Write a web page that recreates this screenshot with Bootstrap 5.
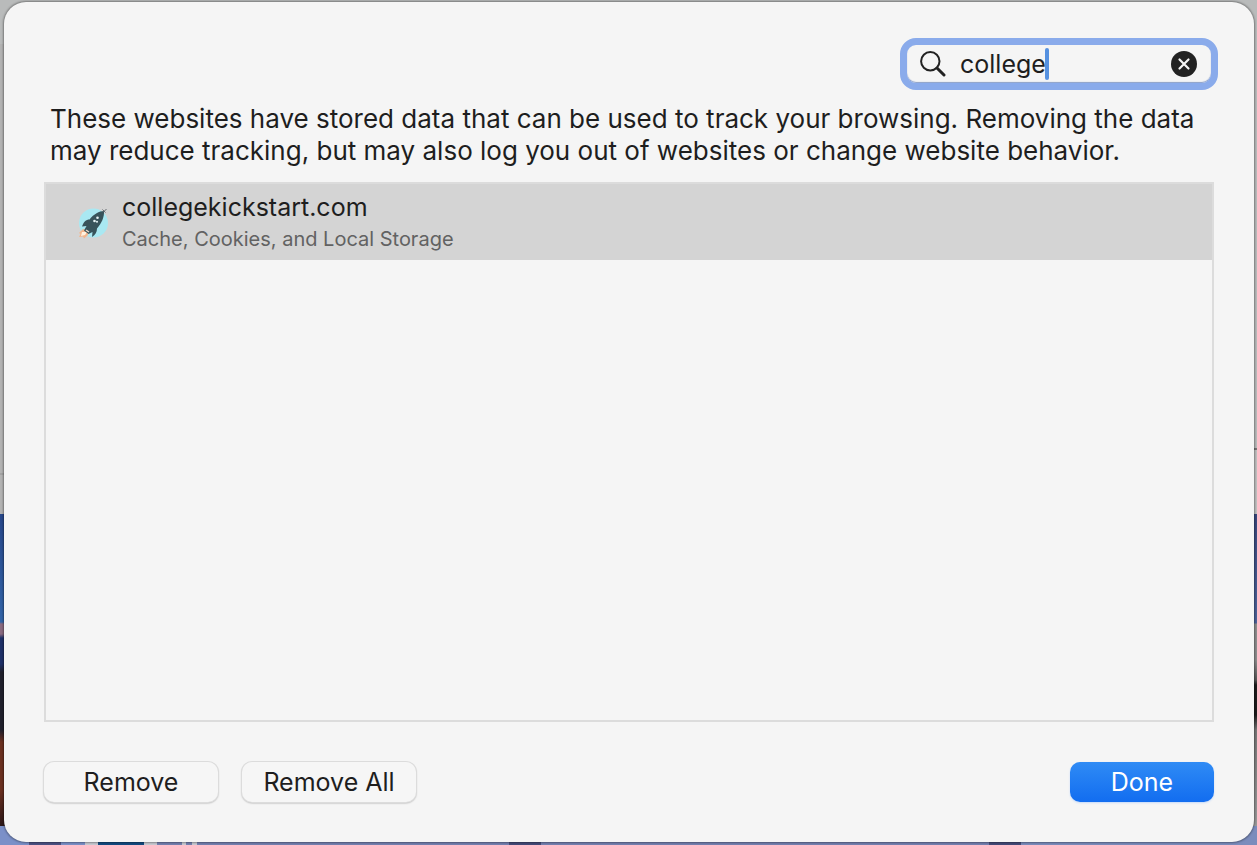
<!DOCTYPE html>
<html lang="en">
<head>
<meta charset="utf-8">
<meta name="viewport" content="width=device-width, initial-scale=1">
<title>Manage Website Data</title>
<link href="https://cdn.jsdelivr.net/npm/bootstrap@5.3.0/dist/css/bootstrap.min.css" rel="stylesheet">
<style>
  body {
    font-family: Inter, "Liberation Sans", sans-serif;
    font-size: 25px;
    line-height: 32px;
    color: #1e1e1e;
    /* desktop behind the sheet: bottom strip, then left and right halves */
    background:
      linear-gradient(90deg, #7b90c8 0 29px, #4c5284 29px 61px, #7b90c8 61px 85px, #c9cbd2 85px 98px, #124a80 98px 144px, #c9cbd2 144px 157px, #7480b0 157px 182px, #c9cbd2 182px 186px, #7480b0 186px 192px, #c9cbd2 192px 197px, #7480b0 197px 509px, #444a78 509px 541px, #7480b0 541px 989px, #444a78 989px 1021px, #7b8cbc 1021px) left bottom / 100% 19px no-repeat,
      linear-gradient(#b9bbbb 0 44px, #b3b3b3 44px 473px, #a3a3a3 473px 475px, #b3b3b3 475px 514px, #27478a 514px, #3264a8 622px, #8a6a80 624px 634px, #1e3068 638px 664px, #20202c 672px 730px, #6b3020 742px 790px, #2b1718 826px) left top / 51% 100% no-repeat,
      linear-gradient(#b9bbbb 0 448px, #777 448px 450px, #c0c0c0 450px 514px, #38477c 514px, #4c6299 623px, #8d8d8d 624px 660px, #555 680px, #1c1c1c 685px 715px, #777 730px, #999 826px) right top / 50% 100% no-repeat;
  }
  .sheet {
    margin: 2px 3px 3px 4px;
    padding: 36px 40px 40px;
    border-radius: 22px;
    background: #f5f5f5;
    box-shadow: 0 0 2px 1px rgba(0, 0, 0, .35);
  }
  .search-box {
    width: 318px;
    height: 52px;
    margin-right: -4px;
    padding: 0 14px 0 13px;
    border: 7px solid #8aabeb;
    border-radius: 16px;
    box-shadow: inset 0 -1px 1px #8a9fc8;
  }
  .search-box input {
    width: 200px;
    margin-left: 14px;
    padding: 0;
    border: 0;
    outline: 0;
    background: transparent;
    color: inherit;
  }
  .text-caret {
    top: 3px;
    left: 138px;
    width: 4px;
    height: 32px;
    border-radius: 2px;
    background: #5591e0;
  }
  .notice { padding: 13px 6px 0; font-size: 26px; }
  .site-list { margin-top: 15px; border: 2px solid #dcdcdc; }
  .site-row {
    height: 76px;
    padding: 1px 32px 0;
    gap: 14px;
    background: #d4d4d4;
  }
  .site-kind { font-size: 20px; color: #626262; }
  .action {
    height: 40px;
    padding: 0;
    border: 0;
    border-radius: 10px;
    font-size: 25px;
    line-height: 38px;
  }
  .action-plain {
    width: 174px;
    color: #1e1e1e;
    background: #f6f6f6;
    box-shadow: 0 0 0 1px #dcdcdc, 0 1px 2px rgba(0, 0, 0, .45);
  }
  .action-plain:hover { background: #eee; }
  .action-done {
    width: 144px;
    color: #fff;
    background: linear-gradient(#2f8bf5, #126df0);
    box-shadow: 0 1px 2px #c4dafa;
  }
  .action-done:hover { color: #fff; background: #126df0; }
</style>
</head>
<body class="vh-100 d-flex flex-column">
<main class="sheet flex-grow-1 d-flex flex-column">
  <form class="d-flex justify-content-end" role="search">
    <div class="search-box position-relative d-flex align-items-center">
      <svg width="26" height="26" viewBox="0 0 26 26" fill="none" stroke="#222" aria-hidden="true"><circle cx="10.300" cy="10.300" r="9.200" stroke-width="2"/><path d="M17 17l7 7" stroke-width="3" stroke-linecap="round"/></svg>
      <input id="q" type="text" value="college" aria-label="Search">
      <span class="text-caret position-absolute"></span>
      <button type="button" class="btn p-0 border-0 ms-auto d-flex flex-shrink-0" aria-label="Clear search">
        <svg width="26" height="26" viewBox="0 0 26 26"><circle cx="13" cy="13" r="13" fill="#222"/><path d="M8.500 8.500l9 9m0-9l-9 9" stroke="#f5f5f5" stroke-width="2.200" stroke-linecap="round"/></svg>
      </button>
    </div>
  </form>
  <p class="notice mb-0">These websites have stored data that can be used to track your browsing. Removing the data may reduce tracking, but may also log you out of websites or change website behavior.</p>
  <ul class="site-list list-unstyled flex-grow-1 mb-0">
    <li class="site-row d-flex align-items-center">
      <svg class="flex-shrink-0" width="30" height="32" viewBox="0 0 30 32" aria-hidden="true">
        <circle cx="15.500" cy="16" r="14.500" fill="#a9e8f2"/>
        <path d="M5 22l-4 4 1.500 1L1 30l4-.5 1 2 4-3.500 1-4z" fill="#f3b58c"/>
        <path d="M4 25l-1 4 4-1 2-3z" fill="#fff1df"/>
        <path d="M26 4c-5 0-10 3-14.500 8.500-3.500 0-6 2.500-7.500 7l4.500-.5-2.500 4.500 4.500 3.500 4-2-.5 5c3.500-2 5-5 5-8.500C23.500 16.500 26.500 10 26 4z" fill="#38535b"/>
        <path d="M24.500 2.500l3 3m1-3.500l-3 3" stroke="#656a70" fill="none"/>
        <circle cx="19.500" cy="10.800" r="1.300" fill="#e5f3f5"/><circle cx="16.500" cy="14" r="1.300" fill="#e5f3f5"/><circle cx="19" cy="14.800" r="1" fill="#e5f3f5"/>
        <path d="M8 23l3 2" stroke="#e7d8c8" stroke-width="1.500"/>
      </svg>
      <div>
        <div>collegekickstart.com</div>
        <div class="site-kind">Cache, Cookies, and Local Storage</div>
      </div>
    </li>
  </ul>
  <div class="d-flex mt-4 pt-3 gap-4">
    <button type="button" class="btn action action-plain">Remove</button>
    <button type="button" class="btn action action-plain">Remove All</button>
    <button type="button" class="btn action action-done ms-auto">Done</button>
  </div>
</main>
<script src="https://cdn.jsdelivr.net/npm/bootstrap@5.3.0/dist/js/bootstrap.bundle.min.js"></script>
</body>
</html>
